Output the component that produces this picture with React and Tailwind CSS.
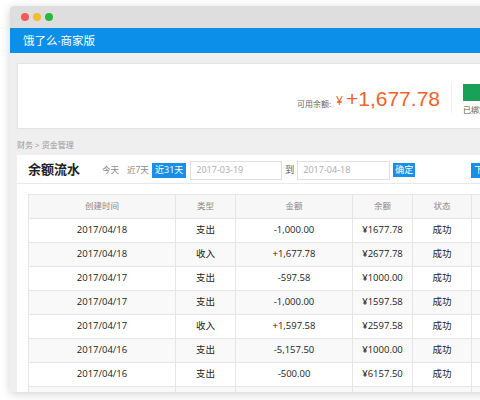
import React from "react";

const rows = [
  ["2017/04/18", "支出", "-1,000.00", "¥1677.78"],
  ["2017/04/18", "收入", "+1,677.78", "¥2677.78"],
  ["2017/04/17", "支出", "-597.58", "¥1000.00"],
  ["2017/04/17", "支出", "-1,000.00", "¥1597.58"],
  ["2017/04/17", "收入", "+1,597.58", "¥2597.58"],
  ["2017/04/16", "支出", "-5,157.50", "¥1000.00"],
  ["2017/04/16", "支出", "-500.00", "¥6157.50"],
  ["2017/04/16", "支出", "-300.00", "¥6657.50"],
];

const font = { fontFamily: '"Open Sans", "Noto Sans CJK SC", sans-serif' };

export default function App() {
  return (
    <div
      className="w-[480px] h-[400px] overflow-hidden bg-white pl-[10px] pt-[6px]"
      style={font}
    >
      <div className="w-[500px] h-[386px] overflow-hidden bg-[#efefef] rounded-tl-[4px] shadow-[0_2px_10px_rgba(0,0,0,0.18)]">
        {/* --- BARRA DA JANELA --- */}
        <div className="h-[22px] bg-[#dedede] flex items-center gap-[4px] pl-[11px]">
          <span className="w-[8px] h-[8px] rounded-full bg-[#f25b57]" />
          <span className="w-[8px] h-[8px] rounded-full bg-[#f4bd2f]" />
          <span className="w-[8px] h-[8px] rounded-full bg-[#27b842]" />
        </div>

        {/* --- CABEÇALHO --- */}
        <div className="h-[25px] bg-[#0b8fe8] flex items-center pl-[13px] text-white text-[11.5px]">
          饿了么·商家版
        </div>

        <div className="pl-[7px] pt-[10px]">
          {/* --- SALDO --- */}
          <div className="h-[66px] bg-white border border-[#e4e4e4] flex items-center pl-[279px] whitespace-nowrap">
            <span className="text-[8px] text-[#666] mt-[16px]">可用余额:</span>
            <span className="text-[12px] text-[#f0622a] ml-[5px] mt-[10px]">¥</span>
            <span
              className="text-[21px] text-[#f0622a] ml-[3px] leading-none mt-[4px]"
              style={{ fontFamily: '"Liberation Sans", Arial, sans-serif' }}
            >
              +1,677.78
            </span>
            <div className="w-px h-[30px] bg-[#eee] ml-[11px] mt-[4px]" />
            <div className="ml-[11px] flex flex-col gap-[5px] mt-[6px]">
              <div className="w-[40px] h-[17px] bg-[#19a15a]" />
              <span className="text-[8px] text-[#555] leading-none">已绑定</span>
            </div>
          </div>

          <div className="h-[26px] flex items-end pb-[6px] text-[8px] text-[#999] leading-none">
            财务 &gt; 资金管理
          </div>

          {/* --- PAINEL --- */}
          <div className="bg-white h-[240px] overflow-hidden">
            <div className="h-[29px] border-b border-[#eaeaea] flex items-center pl-[11px] pt-[2px] whitespace-nowrap">
              <span className="text-[13px] font-bold text-[#222] w-[74px]">余额流水</span>
              <span className="text-[8.5px] text-[#888] w-[25px]">今天</span>
              <span className="text-[8.5px] text-[#888] w-[25px]">近7天</span>
              <span className="text-[9px] text-white bg-[#1a8fe6] px-[3px] h-[15px] flex items-center">
                近31天
              </span>
              <div className="ml-[4px] w-[92px] h-[19px] border border-[#e0e0e0] flex items-center pl-[5px] text-[9px] text-[#aaa]">
                2017-03-19
              </div>
              <span className="text-[9px] text-[#555] mx-[3px]">到</span>
              <div className="w-[93px] h-[19px] border border-[#e0e0e0] flex items-center pl-[5px] text-[9px] text-[#aaa]">
                2017-04-18
              </div>
              <span className="ml-[3px] text-[9px] text-white bg-[#1a8fe6] px-[2px] h-[14px] flex items-center">
                确定
              </span>
              <span className="ml-[56px] text-[9px] text-white bg-[#1a8fe6] px-[3px] h-[15px] flex items-center">
                下载
              </span>
            </div>

            <div className="pl-[11px] pt-[10px]">
              <table className="border-collapse text-center table-fixed w-[520px]">
                <colgroup>
                  <col className="w-[147px]" />
                  <col className="w-[60px]" />
                  <col className="w-[117px]" />
                  <col className="w-[60px]" />
                  <col className="w-[59px]" />
                  <col className="w-[77px]" />
                </colgroup>
                <thead>
                  <tr className="h-[24px] bg-[#f7f7f7] text-[8.5px] text-[#888]">
                    {["创建时间", "类型", "金额", "余额", "状态", "操作"].map((h) => (
                      <th key={h} className="border border-[#e6e6e6] font-normal">
                        {h}
                      </th>
                    ))}
                  </tr>
                </thead>
                <tbody>
                  {rows.map((r, i) => (
                    <tr
                      key={i}
                      className={`h-[24px] text-[9.5px] text-[#222] ${i % 2 ? "bg-[#f9f9f9]" : "bg-white"}`}
                    >
                      <td className="border border-[#e6e6e6]">{r[0]}</td>
                      <td className="border border-[#e6e6e6]">{r[1]}</td>
                      <td className="border border-[#e6e6e6]">{r[2]}</td>
                      <td className="border border-[#e6e6e6]">{r[3]}</td>
                      <td className="border border-[#e6e6e6]">成功</td>
                      <td className="border border-[#e6e6e6]"></td>
                    </tr>
                  ))}
                </tbody>
              </table>
            </div>
          </div>
        </div>
      </div>
    </div>
  );
}
